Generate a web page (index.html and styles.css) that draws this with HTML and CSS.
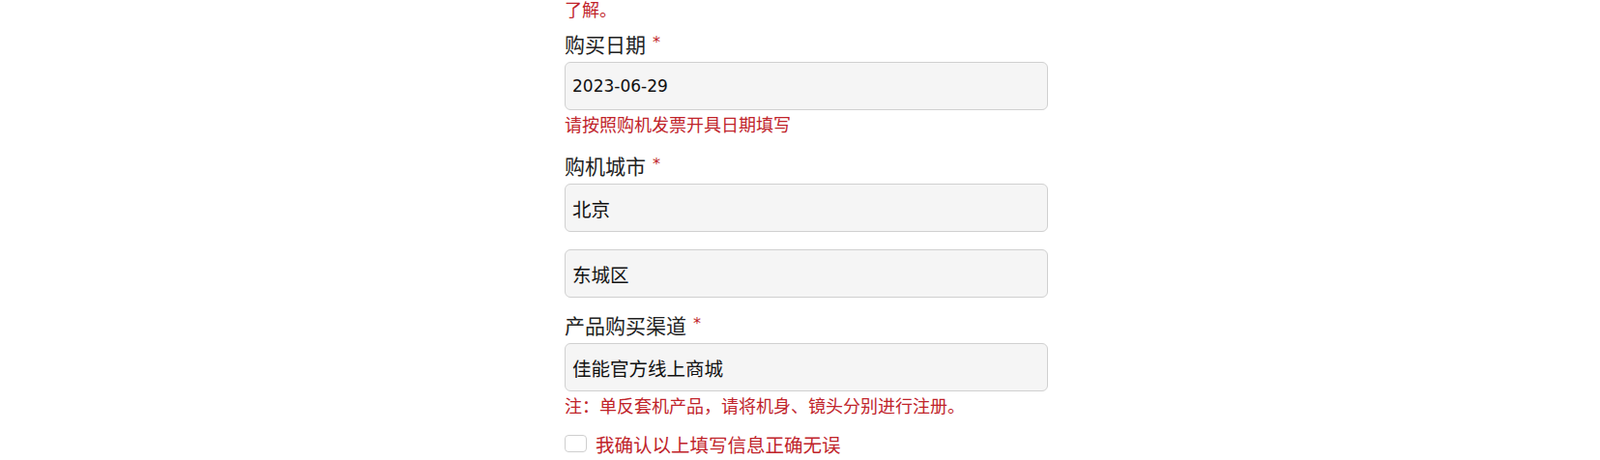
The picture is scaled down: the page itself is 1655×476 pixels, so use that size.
FILE: index.html
```html
<!DOCTYPE html>
<html lang="zh-CN">
<head>
  <meta charset="UTF-8">
  <title>产品注册</title>
  <link rel="stylesheet" href="styles.css">
</head>
<body>
  <div class="form">
    <p class="intro">注：序列号位于机身底部，详情请查看说明书或登录佳能官网了解。</p>

    <div class="field">
      <label class="label">购买日期<span class="req">*</span></label>
      <input class="input date" type="text" value="2023-06-29">
      <p class="hint">请按照购机发票开具日期填写</p>
    </div>

    <div class="field">
      <label class="label">购机城市<span class="req">*</span></label>
      <input class="input" type="text" value="北京">
      <input class="input second" type="text" value="东城区">
    </div>

    <div class="field">
      <label class="label">产品购买渠道<span class="req">*</span></label>
      <input class="input" type="text" value="佳能官方线上商城">
      <p class="hint">注：单反套机产品，请将机身、镜头分别进行注册。</p>
    </div>

    <label class="confirm">
      <span class="box"></span>
      我确认以上填写信息正确无误
    </label>
  </div>
</body>
</html>
```

FILE: styles.css
```css
body {
  margin: 0;
  padding: 0;
  background: #fff;
  font-family: "DejaVu Sans", "Noto Sans CJK SC", sans-serif;
  color: #222;
}
.form {
  width: 500px;
  margin: -28px auto 0;
  padding-left: 13px;
}
.intro {
  margin: 0 0 8px;
  font-size: 18px;
  line-height: 26px;
  color: #c0232a;
}
.field {
  margin-bottom: 15px;
}
.label {
  display: block;
  margin-bottom: 2px;
  font-size: 21px;
  line-height: 30px;
  color: #222;
}
.req {
  margin-left: 7px;
  font-size: 16px;
  line-height: 1;
  vertical-align: 5px;
  color: #c0232a;
}
.input {
  display: block;
  box-sizing: border-box;
  width: 500px;
  height: 50px;
  padding: 0 7px;
  border: 1.5px solid #d0d0d0;
  border-radius: 6px;
  background: #f5f5f5;
  font-family: "DejaVu Sans", "Noto Sans CJK SC", sans-serif;
  font-size: 19.5px;
  color: #111;
  outline: none;
}
.input.date {
  font-size: 17px;
}
.input.second {
  margin-top: 18px;
}
.hint {
  margin: 3px 0 0;
  font-size: 18px;
  line-height: 26px;
  color: #c0232a;
}
.confirm {
  display: flex;
  align-items: center;
  height: 30px;
  margin-top: -5px;
  font-size: 19.5px;
  color: #c0232a;
}
.box {
  box-sizing: border-box;
  width: 23px;
  height: 18px;
  margin-right: 9px;
  border: 1.5px solid #cfcfcf;
  border-radius: 4px;
  background: #fff;
}
```
